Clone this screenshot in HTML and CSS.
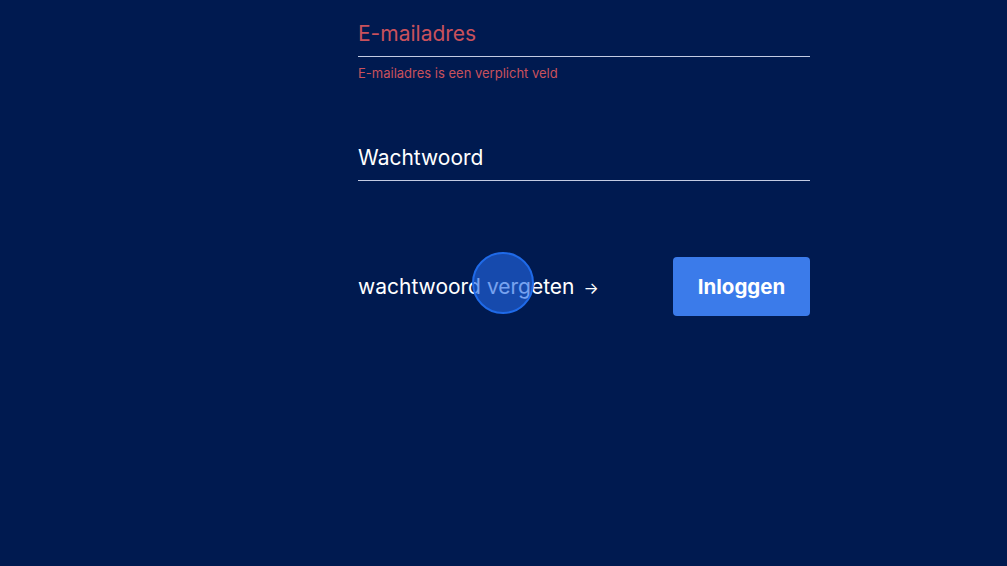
FILE: index.html
```html
<!DOCTYPE html>
<html lang="nl">
<head>
<meta charset="utf-8">
<link rel="stylesheet" href="styles.css">
</head>
<body>
<main class="page">
  <form class="form">
    <div class="field field-error">
      <label class="label">E-mailadres</label>
      <div class="line"></div>
      <div class="error">E-mailadres is een verplicht veld</div>
    </div>
    <div class="field field-pw">
      <label class="label">Wachtwoord</label>
      <div class="line"></div>
    </div>
    <div class="actions">
      <a class="forgot">wachtwoord vergeten <span class="arrow">→</span><span class="cursor"></span></a>
      <button type="button" class="btn">Inloggen</button>
    </div>
  </form>
</main>
</body>
</html>
```

FILE: styles.css
```css
html, body {
  margin: 0;
  padding: 0;
  background: #001a50;
  height: 100%;
}
body {
  font-family: Inter, "Noto Sans", "Liberation Sans", sans-serif;
  color: #ffffff;
}
.page {
  display: flex;
  justify-content: center;
  padding-left: 161px;
}
.form {
  width: 452px;
  display: flex;
  flex-direction: column;
  padding-top: 21px;
}
.label {
  display: block;
  font-size: 21px;
  line-height: 26px;
  padding-bottom: 9px;
}
.field-error .label {
  color: #c9515c;
}
.line {
  height: 1px;
  background: #c3cbe2;
}
.error {
  color: #c9515c;
  font-size: 13px;
  line-height: 16px;
  margin-top: 8px;
}
.field-pw {
  margin-top: 64px;
}
.actions {
  margin-top: 76px;
  display: flex;
  justify-content: space-between;
  align-items: center;
}
.forgot {
  position: relative;
  font-size: 21px;
  color: #ffffff;
  cursor: pointer;
}
.arrow {
  font-size: 16px;
  margin-left: 3px;
}
.cursor {
  position: absolute;
  left: 114px;
  top: -22px;
  width: 58px;
  height: 58px;
  border-radius: 50%;
  border: 2px solid #1f6ae8;
  background: rgba(35, 105, 230, 0.62);
}
.btn {
  width: 137px;
  height: 59px;
  background: #3b7bea;
  border: none;
  border-radius: 4px;
  color: #ffffff;
  font-family: inherit;
  font-size: 20.5px;
  font-weight: 700;
  cursor: pointer;
}
```
